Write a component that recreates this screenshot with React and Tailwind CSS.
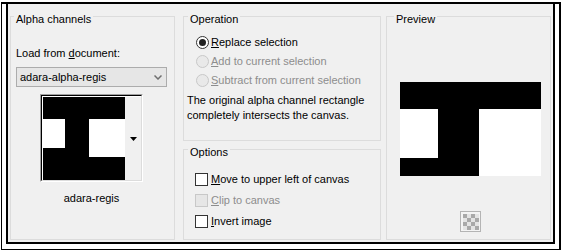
import React from "react";

function Radio({ checked, disabled, children }) {
  return (
    <div className="h-[19px] flex items-center pl-[12px]">
      <div
        className={
          disabled
            ? "w-[13px] h-[13px] rounded-full border border-[#c8c8c8] bg-[#e9e9e9] flex items-center justify-center"
            : "w-[13px] h-[13px] rounded-full border border-[#333333] bg-white flex items-center justify-center"
        }
      >
        {checked ? <div className="w-[7px] h-[7px] rounded-full bg-[#222222]" /> : null}
      </div>
      <span className={disabled ? "ml-[2px] text-[#8d8d8d]" : "ml-[2px] text-black"}>{children}</span>
    </div>
  );
}

function Check({ disabled, children }) {
  return (
    <div className="h-[21px] flex items-center pl-[11px]">
      <div
        className={
          disabled
            ? "w-[13px] h-[13px] border border-[#c8c8c8] bg-[#e6e6e6]"
            : "w-[13px] h-[13px] border border-[#333333] bg-white"
        }
      />
      <span className={disabled ? "ml-[3px] text-[#8d8d8d]" : "ml-[3px] text-black"}>{children}</span>
    </div>
  );
}

function Checker() {
  const cells = [];
  for (let r = 0; r < 4; r++) {
    for (let c = 0; c < 4; c++) {
      cells.push(
        <rect
          key={r + "-" + c}
          x={3 + c * 4}
          y={3 + r * 4}
          width="4"
          height="4"
          fill={(r + c) % 2 === 0 ? "#a9a9a9" : "#e4e4e4"}
        />
      );
    }
  }
  return (
    <svg width="21" height="21" viewBox="0 0 21 21">
      <rect x="0.5" y="0.5" width="20" height="20" fill="#f4f4f4" stroke="#b4b4b4" />
      {cells}
    </svg>
  );
}

export default function App() {
  return (
    <div className="w-[561px] h-[250px] bg-white pt-[2px] pl-[1px] overflow-hidden font-['Liberation_Sans',Arial,sans-serif] text-[11px] leading-[15px] text-black">
      <div className="w-[560px] h-[248px] border-t-2 border-l border-r-2 border-b border-black px-[4px]">
        <div className="h-[240px] border-l-2 border-r-2 border-b-2 border-black bg-[#f0f0f0] flex pt-[12px] pl-[2px]">
          {/* Alpha channels */}
          <div className="relative w-[165px] h-[224px] border border-[#dcdcdc] flex flex-col pl-[5px]">
            <span className="absolute left-[3px] -top-[5px] px-[2px] bg-[#f0f0f0]">Alpha channels</span>
            <div className="mt-[29px]">
              Load from <u>d</u>ocument:
            </div>
            <div className="mt-[6px] w-[151px] h-[20px] border border-[#acacac] bg-[#e6e6e6] flex items-center justify-between pl-[3px] pr-[4px]">
              <span>adara-alpha-regis</span>
              <svg width="8" height="5" viewBox="0 0 8 5">
                <polyline points="0.5,0.5 4,4 7.5,0.5" fill="none" stroke="#6f6f6f" strokeWidth="1.5" />
              </svg>
            </div>
            <div className="mt-[7px] ml-[24px] w-[103px] h-[88px] border border-t-[#a0a0a0] border-l-[#a0a0a0] border-b-white border-r-white">
              <div className="w-full h-full border border-t-black border-l-black border-b-[#dcdcdc] border-r-[#dcdcdc] bg-white flex pt-[1px] pl-[1px]">
                <svg width="82" height="83" viewBox="0 0 82 83" className="block shrink-0">
                  <rect x="0" y="0" width="82" height="83" fill="#000" />
                  <rect x="0" y="22" width="22" height="29" fill="#fff" />
                  <rect x="46" y="22" width="36" height="38" fill="#fff" />
                </svg>
                <div className="flex-1 bg-[#f0f0f0] flex items-center justify-center">
                  <svg width="7" height="4" viewBox="0 0 7 4">
                    <polygon points="0,0 7,0 3.5,4" fill="#000" />
                  </svg>
                </div>
              </div>
            </div>
            <div className="mt-[9px] ml-[24px] w-[103px] text-center">adara-regis</div>
          </div>

          {/* Middle column */}
          <div className="ml-[8px] w-[198px] flex flex-col">
            <div className="relative h-[125px] border border-[#dcdcdc] flex flex-col">
              <span className="absolute left-[4px] -top-[5px] px-[2px] bg-[#f0f0f0]">Operation</span>
              <div className="mt-[16px]">
                <Radio checked>
                  <u>R</u>eplace selection
                </Radio>
                <Radio disabled>
                  <u>A</u>dd to current selection
                </Radio>
                <Radio disabled>
                  <u>S</u>ubtract from current selection
                </Radio>
              </div>
              <p className="mt-[3px] pl-[3px]">
                The original alpha channel rectangle
                <br />
                completely intersects the canvas.
              </p>
            </div>
            <div className="relative mt-[8px] h-[91px] border border-[#dcdcdc] flex flex-col">
              <span className="absolute left-[4px] -top-[5px] px-[2px] bg-[#f0f0f0]">Options</span>
              <div className="mt-[19px]">
                <Check>
                  <u>M</u>ove to upper left of canvas
                </Check>
                <Check disabled>
                  <u>C</u>lip to canvas
                </Check>
                <Check>
                  <u>I</u>nvert image
                </Check>
              </div>
            </div>
          </div>

          {/* Preview */}
          <div className="relative ml-[5px] w-[165px] h-[224px] border border-[#dcdcdc] flex flex-col">
            <span className="absolute left-[7px] -top-[5px] px-[2px] bg-[#f0f0f0]">Preview</span>
            <svg width="141" height="94" viewBox="0 0 141 94" className="block mt-[65px] ml-[13px]">
              <rect x="0" y="0" width="141" height="94" fill="#fff" />
              <rect x="0" y="0" width="141" height="27" fill="#000" />
              <rect x="38" y="27" width="41" height="67" fill="#000" />
              <rect x="0" y="76" width="79" height="18" fill="#000" />
            </svg>
            <div className="mt-[35px] ml-[73px]">
              <Checker />
            </div>
          </div>
        </div>
      </div>
    </div>
  );
}
